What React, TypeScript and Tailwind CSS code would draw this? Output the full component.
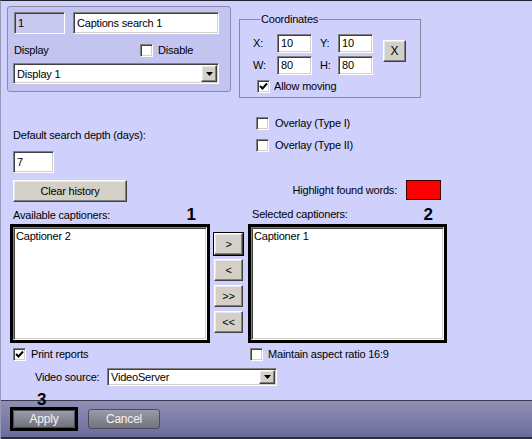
import React from "react";

const sunken =
  "bg-white border border-t-[#808080] border-l-[#808080] border-b-white border-r-white shadow-[inset_1px_1px_0_#404040,inset_-1px_-1px_0_#d4d0c8]";
const raised =
  "bg-[#d4d0c8] border border-t-white border-l-white border-b-[#404040] border-r-[#404040] shadow-[inset_-1px_-1px_0_#808080,inset_1px_1px_0_#e8e8e8]";

function Check({ checked }: { checked?: boolean }) {
  return (
    <span className={`w-[13px] h-[13px] shrink-0 flex items-center justify-center ${sunken}`}>
      {checked && (
        <svg width="9" height="9" viewBox="0 0 9 9">
          <polyline points="1,4 3.5,6.5 8,1.5" fill="none" stroke="#000" strokeWidth="2" />
        </svg>
      )}
    </span>
  );
}

function Arrow() {
  return (
    <span className={`w-[16px] h-full shrink-0 flex items-center justify-center ${raised}`}>
      <svg width="7" height="4" viewBox="0 0 7 4">
        <polygon points="0,0 7,0 3.5,4" fill="#000" />
      </svg>
    </span>
  );
}

function Select({ value, className }: { value: string; className: string }) {
  return (
    <div className={`flex items-stretch ${sunken} ${className}`}>
      <span className="flex-1 pl-[3px] flex items-center leading-[14px]">{value}</span>
      <div className="py-[1px] pr-[1px]">
        <Arrow />
      </div>
    </div>
  );
}

export default function App() {
  return (
    <div className="w-[532px] h-[439px] bg-[#d0d0fc] relative overflow-hidden flex flex-col border-t border-[#22222e] border-l border-l-[#9898b8] font-['Liberation_Sans',Arial,sans-serif] text-[11px] tracking-[-0.2px] text-black">
      {/* top section */}
      <div className="flex h-[99px] shrink-0">
        <div className="ml-[6px] mt-[5px] w-[224px] h-[86px] rounded-[3px] border border-[#8a8aac] bg-[#c4c4f0] px-[6px] pt-[5px]">
          <div className="flex">
            <div className="w-[51px] h-[22px] pl-[3px] flex items-center bg-[#c8c8f0] border border-t-[#808080] border-l-[#808080] border-b-white border-r-white shadow-[inset_1px_1px_0_#404040]">
              1
            </div>
            <div className={`ml-[8px] w-[146px] h-[22px] pl-[3px] flex items-center ${sunken}`}>
              Captions search 1
            </div>
          </div>
          <div className="mt-[9px] h-[14px] flex items-center">
            <span className="w-[126px]">Display</span>
            <Check />
            <span className="ml-[5px]">Disable</span>
          </div>
          <Select value="Display 1" className="mt-[6px] w-[206px] h-[21px] -ml-[1px]" />
        </div>

        <fieldset className="ml-[8px] mt-[11px] w-[182px] h-[86px] border border-[#8a8a9a] pl-[13px] pt-[8px]">
          <legend className="ml-[7px] px-[1px] leading-[14px]">Coordinates</legend>
          <div className="flex">
            <div className="flex flex-col gap-[3px]">
              <div className="flex items-center h-[19px]">
                <span className="w-[24px]">X:</span>
                <div className={`w-[35px] h-[19px] pl-[3px] flex items-center ${sunken}`}>10</div>
                <span className="ml-[8px] w-[18px]">Y:</span>
                <div className={`w-[35px] h-[19px] pl-[3px] flex items-center ${sunken}`}>10</div>
              </div>
              <div className="flex items-center h-[19px]">
                <span className="w-[24px]">W:</span>
                <div className={`w-[35px] h-[19px] pl-[3px] flex items-center ${sunken}`}>80</div>
                <span className="ml-[8px] w-[18px]">H:</span>
                <div className={`w-[35px] h-[19px] pl-[3px] flex items-center ${sunken}`}>80</div>
              </div>
            </div>
            <div className={`ml-[10px] mt-[6px] w-[23px] h-[22px] flex items-center justify-center text-[12px] ${raised}`}>
              X
            </div>
          </div>
          <div className="mt-[5px] ml-[4px] h-[13px] flex items-center">
            <Check checked />
            <span className="ml-[4px]">Allow moving</span>
          </div>
        </fieldset>
      </div>

      {/* middle section */}
      <div className="flex h-[124px] shrink-0">
        <div className="ml-[9px] w-[200px] pl-[3px] flex flex-col">
          <div className="mt-[28px] leading-[14px]">Default search depth (days):</div>
          <div className={`mt-[9px] w-[41px] h-[22px] pl-[3px] flex items-center ${sunken}`}>7</div>
          <div className={`mt-[7px] w-[114px] h-[22px] flex items-center justify-center ${raised}`}>
            Clear history
          </div>
          <div className="mt-[3px] h-[19px] flex items-center">
            <span className="leading-[14px]">Available captioners:</span>
            <span className="ml-auto mr-[14px] text-[17px] font-bold leading-[17px] tracking-normal">1</span>
          </div>
        </div>
        <div className="ml-[38px] w-[199px] flex flex-col">
          <div className="mt-[16px] h-[14px] pl-[8px] flex items-center">
            <Check />
            <span className="ml-[6px]">Overlay (Type I)</span>
          </div>
          <div className="mt-[8px] h-[14px] pl-[8px] flex items-center">
            <Check />
            <span className="ml-[6px]">Overlay (Type II)</span>
          </div>
          <div className="mt-[28px] h-[20px] flex items-center justify-end pr-[6px]">
            <span>Highlight found words:</span>
            <span className="ml-[9px] w-[35px] h-[20px] bg-[#ff0000] border border-[#3a0000]" />
          </div>
          <div className="mt-[4px] h-[20px] pl-[4px] flex items-center">
            <span className="leading-[14px]">Selected captioners:</span>
            <span className="ml-auto mr-[14px] text-[17px] font-bold leading-[17px] tracking-normal">2</span>
          </div>
        </div>
      </div>

      {/* lists */}
      <div className="flex h-[119px] shrink-0">
        <div className="ml-[9px] w-[200px] h-[119px] border-[3px] border-black">
          <div className={`w-full h-full pl-[2px] pt-[1px] leading-[14px] ${sunken}`}>Captioner 2</div>
        </div>
        <div className="ml-[4px] w-[29px] mt-[9px] flex flex-col gap-[4px]">
          <div className={`h-[22px] flex items-center justify-center outline outline-1 outline-black ${raised}`}>&gt;</div>
          <div className={`h-[22px] flex items-center justify-center ${raised}`}>&lt;</div>
          <div className={`h-[22px] flex items-center justify-center ${raised}`}>&gt;&gt;</div>
          <div className={`h-[22px] flex items-center justify-center ${raised}`}>&lt;&lt;</div>
        </div>
        <div className="ml-[5px] w-[199px] h-[119px] border-[3px] border-black">
          <div className={`w-full h-full pl-[2px] pt-[1px] leading-[14px] ${sunken}`}>Captioner 1</div>
        </div>
      </div>

      {/* bottom options */}
      <div className="mt-[4px] h-[14px] flex items-center shrink-0">
        <div className="ml-[12px] w-[237px] flex items-center">
          <Check checked />
          <span className="ml-[5px]">Print reports</span>
        </div>
        <Check />
        <span className="ml-[5px]">Maintain aspect ratio 16:9</span>
      </div>
      <div className="mt-[7px] h-[18px] flex items-center shrink-0">
        <span className="ml-[34px] w-[72px]">Video source:</span>
        <Select value="VideoServer" className="w-[170px] h-[18px]" />
      </div>

      {/* bottom bar */}
      <div className="mt-auto h-[39px] shrink-0 border-t border-[#3a3a50] border-b-2 border-b-[#2c2c3c] bg-linear-to-b from-[#8f8fb4] to-[#6c6c9c] flex items-start relative">
        <span className="absolute left-[36px] -top-[10px] text-[17px] font-bold leading-[17px] tracking-normal">3</span>
        <div className="ml-[9px] mt-[6px] w-[68px] h-[24px] border-[3px] border-black">
          <div className="w-full h-full rounded-[2px] border border-[#4a4a58] bg-linear-to-b from-[#9c9ca8] to-[#72727e] flex items-center justify-center text-[#f4f4f4] text-[12px]">
            Apply
          </div>
        </div>
        <div className="ml-[10px] mt-[8px] w-[72px] h-[20px] rounded-[3px] border border-[#4a4a58] bg-linear-to-b from-[#9c9ca8] to-[#72727e] flex items-center justify-center text-[#f4f4f4] text-[12px]">
          Cancel
        </div>
      </div>
    </div>
  );
}
